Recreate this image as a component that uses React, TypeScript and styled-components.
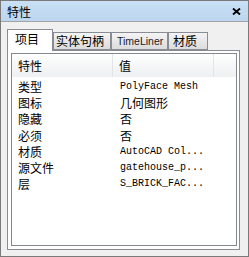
import React from "react";
import styled, { createGlobalStyle } from "styled-components";

const GlobalStyle = createGlobalStyle`
  html, body { margin: 0; padding: 0; background: #f0f0f0; }
  body { font-family: "Noto Sans CJK SC", "Noto Sans", sans-serif; }
  * { box-sizing: border-box; }
`;

const CJK = `"Noto Sans CJK SC", "Noto Sans", sans-serif`;

const Window = styled.div`
  width: 249px;
  height: 257px;
  border: 1px solid #7a7a7a;
  background: #f0f0f0;
  display: flex;
  flex-direction: column;
`;

const TitleBar = styled.div`
  flex: none;
  height: 21px;
  display: flex;
  align-items: center;
  justify-content: space-between;
  padding: 2px 7px 0 6px;
  background: linear-gradient(#c9e0f5, #bdd6ef);
  border-bottom: 1px solid #a3a3a3;
`;

const Title = styled.span`
  font-family: ${CJK};
  font-size: 12px;
  line-height: 16px;
  color: #000;
`;

const CloseIcon = () => (
  <svg width="9" height="7" viewBox="0 0 9 7" style={{ marginTop: -1 }}>
    <path d="M1 0.5 L8 6.5 M8 0.5 L1 6.5" stroke="#000" strokeWidth="1.9" />
  </svg>
);

const Body = styled.div`
  flex: 1;
  display: flex;
  flex-direction: column;
  padding: 7px 8px 6px 6px;
`;

const TabStrip = styled.div`
  flex: none;
  height: 21px;
  display: flex;
  align-items: flex-end;
  position: relative;
  z-index: 1;
`;

const Tab = styled.div<{ $active?: boolean; $w: number; $pl: number; $latin?: boolean }>`
  width: ${(p) => p.$w}px;
  height: ${(p) => (p.$active ? 22 : 18)}px;
  margin-bottom: ${(p) => (p.$active ? -1 : 0)}px;
  padding-left: ${(p) => p.$pl}px;
  padding-top: ${(p) => (p.$active ? 1 : 0)}px;
  border: 1px solid #898c95;
  border-bottom: ${(p) => (p.$active ? "none" : "1px solid #898c95")};
  background: ${(p) => (p.$active ? "#ffffff" : "linear-gradient(#f4f4f4, #dcdcdc)")};
  font-family: ${(p) => (p.$latin ? `"Liberation Sans", Arial, sans-serif` : CJK)};
  font-size: ${(p) => (p.$latin ? 10.5 : 12)}px;
  line-height: 16px;
  color: ${(p) => (p.$latin ? "#1a1a2a" : "#000")};
  white-space: nowrap;
`;

const Panel = styled.div`
  flex: 1;
  display: flex;
  border: 1px solid #898c95;
  background: #ffffff;
  padding: 2px 2px 3px 3px;
`;

const ListBox = styled.div`
  flex: 1;
  display: flex;
  flex-direction: column;
  border: 1px solid #828790;
  background: #ffffff;
`;

const Header = styled.div`
  flex: none;
  display: grid;
  grid-template-columns: 101px 101px 1fr;
  height: 23px;
  background: linear-gradient(#ffffff 0%, #f7f8f9 40%, #eef0f2 100%);
`;

const HeaderCell = styled.div<{ $last?: boolean }>`
  border-right: ${(p) => (p.$last ? "none" : "1px solid #e3e4e6")};
  padding-left: 6px;
  font-family: ${CJK};
  font-size: 12px;
  line-height: 23px;
  color: #000;
`;

const Rows = styled.div`
  padding-top: 2px;
  display: flex;
  flex-direction: column;
`;

const Row = styled.div`
  display: grid;
  grid-template-columns: 101px 1fr;
  height: 16.2px;
`;

const NameCell = styled.div`
  padding-left: 6px;
  font-family: ${CJK};
  font-size: 12px;
  line-height: 16px;
  color: #000;
`;

const ValueCell = styled.div<{ $mono?: boolean }>`
  padding-left: 7px;
  font-family: ${(p) => (p.$mono ? `"Liberation Mono", "Courier New", monospace` : CJK)};
  font-size: ${(p) => (p.$mono ? 10 : 12)}px;
  line-height: 16px;
  color: #000;
  white-space: pre;
`;

const tabs = [
  { label: "项目", w: 46, pl: 7, active: true },
  { label: "实体句柄", w: 58, pl: 2 },
  { label: "TimeLiner", w: 57, pl: 5, latin: true },
  { label: "材质", w: 40, pl: 4 },
];

const rows: { name: string; value: string; mono?: boolean }[] = [
  { name: "类型", value: "PolyFace Mesh", mono: true },
  { name: "图标", value: "几何图形" },
  { name: "隐藏", value: "否" },
  { name: "必须", value: "否" },
  { name: "材质", value: "AutoCAD Col...", mono: true },
  { name: "源文件", value: "gatehouse_p...", mono: true },
  { name: "层", value: "S_BRICK_FAC...", mono: true },
];

export default function App() {
  return (
    <>
      <GlobalStyle />
      <Window>
        <TitleBar>
          <Title>特性</Title>
          <CloseIcon />
        </TitleBar>
        <Body>
          <TabStrip>
            {tabs.map((t) => (
              <Tab key={t.label} $active={t.active} $w={t.w} $pl={t.pl} $latin={t.latin}>
                {t.label}
              </Tab>
            ))}
          </TabStrip>
          <Panel>
            <ListBox>
              <Header>
                <HeaderCell>特性</HeaderCell>
                <HeaderCell>值</HeaderCell>
                <HeaderCell $last />
              </Header>
              <Rows>
                {rows.map((r) => (
                  <Row key={r.name}>
                    <NameCell>{r.name}</NameCell>
                    <ValueCell $mono={r.mono}>{r.value}</ValueCell>
                  </Row>
                ))}
              </Rows>
            </ListBox>
          </Panel>
        </Body>
      </Window>
    </>
  );
}
